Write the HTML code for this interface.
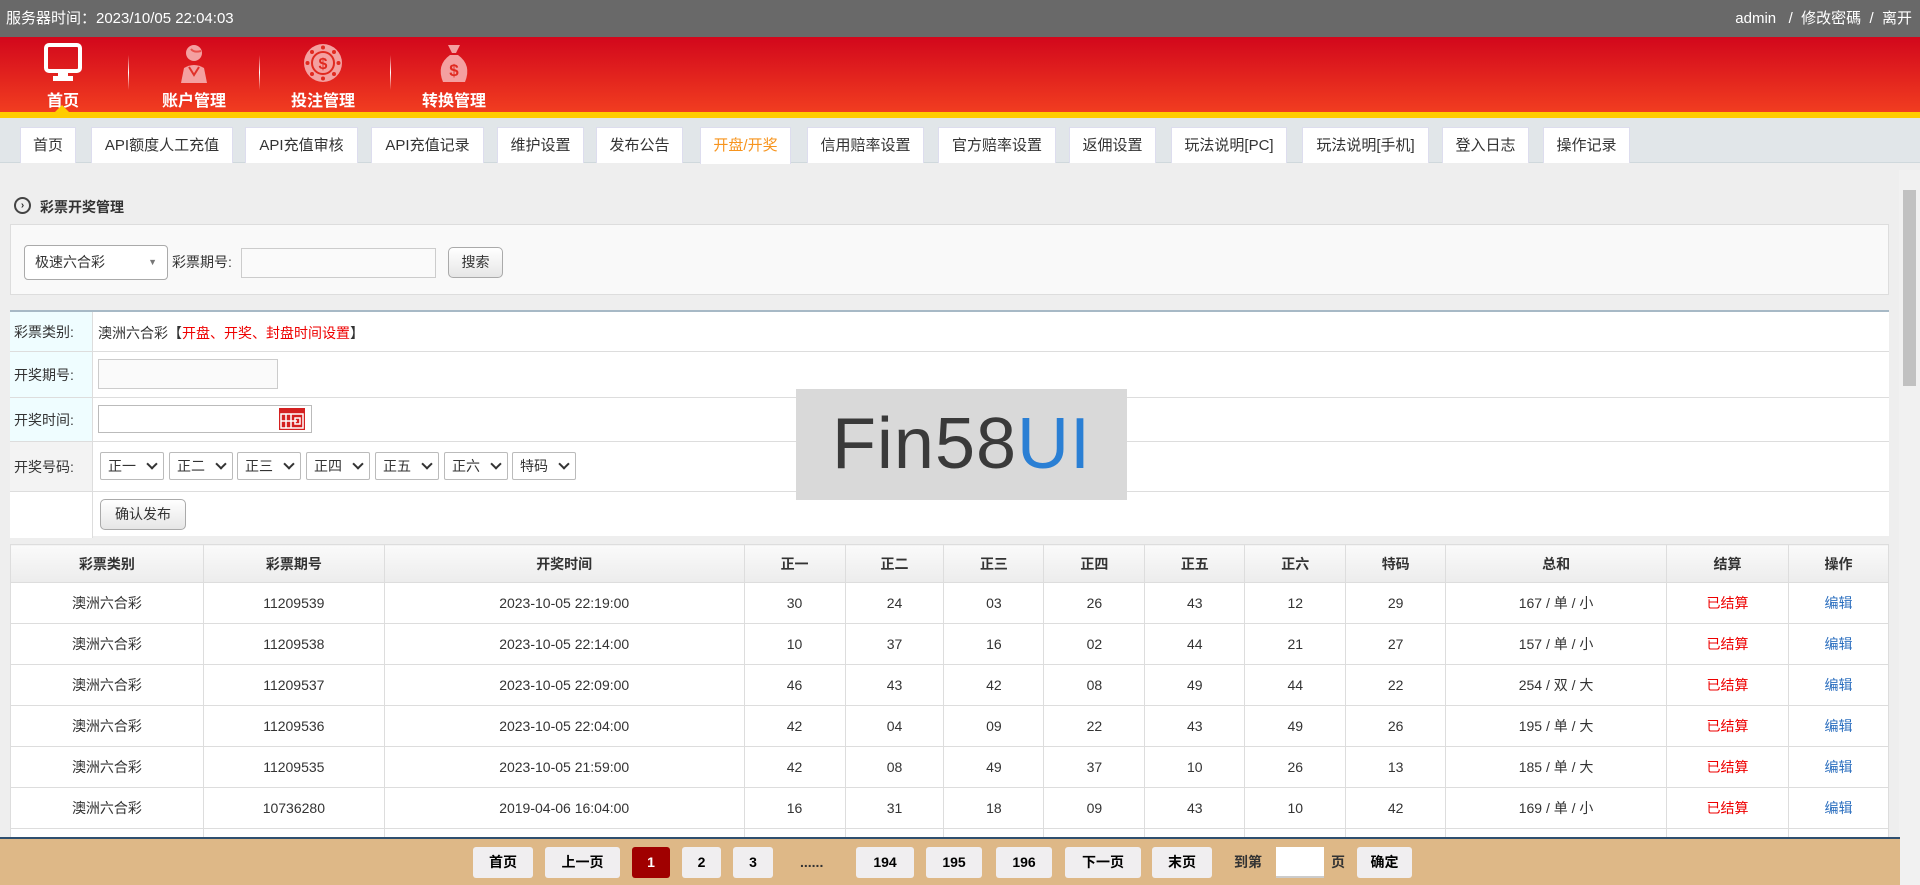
<!DOCTYPE html>
<html><head><meta charset="utf-8">
<style>
*{box-sizing:border-box;margin:0;padding:0}
body{width:1920px;height:885px;overflow:hidden;background:#eee;font-family:"Liberation Sans","Noto Sans CJK SC",sans-serif;font-size:14px;color:#333;position:relative}
.top{position:absolute;left:0;top:0;width:1920px;height:37px;background:#696969;color:#fff;font-size:15px;line-height:37px;padding:0 6px}
.top .r{position:absolute;right:8px;top:0}
.red{position:absolute;top:37px;left:0;width:1920px;height:75px;background:linear-gradient(#d2071c,#f13d20)}
.yel{position:absolute;top:112px;left:0;width:1920px;height:6px;background:#ffcc00}
.nav{position:absolute;top:0;color:#fff;font-weight:bold;font-size:16px;text-align:center;width:110px}
.nav svg{display:block;margin:6px auto 0}
.nav span{display:block;margin-top:4px}
.sep{position:absolute;top:55px;width:1px;height:35px;background:linear-gradient(rgba(255,255,255,0),#fff,rgba(255,255,255,0))}
.tabs{position:absolute;top:118px;left:0;width:1920px;height:45px;background:#e1e6e9;border-bottom:1px solid #cfd8dc}
.tab{position:absolute;top:9px;height:36px;background:#fff;border:1px solid #dde;border-bottom:none;font-size:15px;line-height:35px;text-align:center;color:#333}
.tab.on{color:#f7941d;height:37px}
.abs{position:absolute}
.panel{left:10px;top:224px;width:1879px;height:71px;background:#f9f9f9;border:1px solid #ddd}
.sel{background:#fff;border:1px solid #aaa;border-radius:4px}
.inp{background:#fafafa;border:1px solid #ccc}
.btn{background:linear-gradient(#fff,#e6e6e6);border:1px solid #aaa;border-radius:5px;text-align:center;font-size:14px}
.form{left:10px;top:310px;width:1879px;height:226px;background:#fff;border-top:2px solid #a7b9c6}
.frow{position:absolute;left:0;width:1879px;border-bottom:1px solid #ddd}
.lab{position:absolute;left:0;top:0;bottom:0;width:83px;border-right:1px solid #ddd;background:#effdff;line-height:normal;padding-left:4px;display:flex;align-items:center;font-size:14px}
.dd{position:absolute;top:10px;height:28px;background:#fff;border:1px solid #bbb;border-radius:2px;font-size:14px;line-height:26px;padding-left:7px}
.dd:after{content:"";position:absolute;right:7px;top:7px;width:6px;height:6px;border-right:2px solid #333;border-bottom:2px solid #333;transform:rotate(45deg)}
table{position:absolute;left:10px;top:544px;width:1879px;border-collapse:collapse;background:#fff}
td,th{border:1px solid #ddd;text-align:center;font-size:14px;height:41px}
th{height:38px;background:linear-gradient(#fafafa,#ececec);font-weight:bold;color:#333}
.rd{color:#e00}.bl{color:#2c6fbf}
.foot{position:absolute;left:0;top:837px;width:1900px;height:48px;background:#deb887;border-top:2px solid #2f4f6f}
.pb{position:absolute;top:8px;height:31px;background:#f0eef0;border-radius:3px;text-align:center;line-height:31px;font-size:14px;color:#000;font-weight:bold}
.sb{position:absolute;right:0;top:170px;width:21px;height:715px;background:#f1f1f1}
</style></head><body>
<div class="top">服务器时间：2023/10/05 22:04:03<div class="r">admin &nbsp; / &nbsp;修改密碼 &nbsp;/ &nbsp;离开</div></div>
<div class="red">
 <div class="nav" style="left:8px"><svg width="40" height="40" viewBox="0 0 40 40"><rect x="3" y="2" width="34" height="26" rx="3" fill="none" stroke="#fff" stroke-width="4"/><rect x="15" y="28" width="10" height="6" fill="#fff"/><rect x="10" y="33" width="20" height="5" fill="#fff"/></svg><span>首页</span></div>
 <div class="sep" style="left:128px;top:18px"></div>
 <div class="nav" style="left:139px"><svg width="34" height="40" viewBox="0 0 34 40"><circle cx="17" cy="10" r="8" fill="#f4a0a0"/><path d="M14 6 Q17 10 24 8" stroke="#e8504a" stroke-width="2" fill="none"/><path d="M4 40 L7 25 Q17 19 27 25 L30 40Z" fill="#f4a0a0"/><path d="M12 24 L17 32 L22 24" stroke="#e0302a" stroke-width="2" fill="none"/></svg><span>账户管理</span></div>
 <div class="sep" style="left:259px;top:18px"></div>
 <div class="nav" style="left:268px"><svg width="40" height="40" viewBox="0 0 40 40"><circle cx="20" cy="20" r="19" fill="#f4a0a0"/><circle cx="20" cy="20" r="11" fill="none" stroke="#e02a20" stroke-width="2"/><g fill="#e02a20"><circle cx="20" cy="4.5" r="2"/><circle cx="20" cy="35.5" r="2"/><circle cx="4.5" cy="20" r="2"/><circle cx="35.5" cy="20" r="2"/><circle cx="9" cy="9" r="2"/><circle cx="31" cy="9" r="2"/><circle cx="9" cy="31" r="2"/><circle cx="31" cy="31" r="2"/></g><text x="20" y="26" font-size="16" font-weight="bold" fill="#e02a20" text-anchor="middle" font-family="Liberation Sans">$</text></svg><span>投注管理</span></div>
 <div class="sep" style="left:390px;top:18px"></div>
 <div class="nav" style="left:399px"><svg width="36" height="40" viewBox="0 0 36 40"><path d="M12 2 L24 2 L20 10 L16 10Z M7 39 Q0 22 14 12 L22 12 Q36 22 29 39Z" fill="#f4a0a0"/><text x="18" y="33" font-size="17" font-weight="bold" fill="#e02a20" text-anchor="middle" font-family="Liberation Sans">$</text></svg><span>转换管理</span></div>
 <div class="abs" style="left:55px;top:68px;width:0;height:0;border-left:7px solid transparent;border-right:7px solid transparent;border-bottom:7px solid #ffcc00"></div>
</div>
<div class="yel"></div>
<div class="tabs">
<div class="tab" style="left:20px;width:56px">首页</div>
<div class="tab" style="left:91px;width:142px">API额度人工充值</div>
<div class="tab" style="left:245px;width:113px">API充值审核</div>
<div class="tab" style="left:371px;width:113px">API充值记录</div>
<div class="tab" style="left:497px;width:87px">维护设置</div>
<div class="tab" style="left:596px;width:87px">发布公告</div>
<div class="tab on" style="left:700px;width:91px">开盘/开奖</div>
<div class="tab" style="left:807px;width:117px">信用赔率设置</div>
<div class="tab" style="left:938px;width:118px">官方赔率设置</div>
<div class="tab" style="left:1069px;width:87px">返佣设置</div>
<div class="tab" style="left:1171px;width:116px">玩法说明[PC]</div>
<div class="tab" style="left:1302px;width:127px">玩法说明[手机]</div>
<div class="tab" style="left:1442px;width:87px">登入日志</div>
<div class="tab" style="left:1543px;width:87px">操作记录</div>
</div>
<div class="sb"><div style="position:absolute;left:4px;top:20px;width:13px;height:196px;background:#c1c1c1"></div></div>
<div class="abs" style="left:14px;top:197px;width:17px;height:17px;border:2px solid #444;border-radius:50%;font-size:10px;line-height:13px;text-align:center;font-weight:bold">›</div>
<div class="abs" style="left:40px;top:197px;font-weight:bold;font-size:14px">彩票开奖管理</div>
<div class="abs panel">
 <div class="abs sel" style="left:13px;top:20px;width:144px;height:35px;line-height:33px;padding-left:10px;font-size:14px">极速六合彩<span style="position:absolute;right:10px;top:0;font-size:9px;color:#777">▼</span></div>
 <div class="abs" style="left:161px;top:27px">彩票期号:</div>
 <div class="abs inp" style="left:230px;top:23px;width:195px;height:30px"></div>
 <div class="abs btn" style="left:437px;top:22px;width:55px;height:31px;line-height:29px">搜索</div>
</div>
<div class="abs form">
 <div class="frow" style="top:0;height:40px"><div class="lab">彩票类别:</div><div class="abs" style="left:88px;top:11px">澳洲六合彩【<span class="rd">开盘、开奖、封盘时间设置</span>】</div></div>
 <div class="frow" style="top:40px;height:46px"><div class="lab">开奖期号:</div><div class="abs inp" style="left:88px;top:7px;width:180px;height:30px"></div></div>
 <div class="frow" style="top:86px;height:44px"><div class="lab">开奖时间:</div><div class="abs" style="left:88px;top:7px;width:214px;height:28px;border:1px solid #bbb;background:#fff">
  <svg class="abs" style="right:6px;top:2px" width="26" height="22" viewBox="0 0 26 22"><rect x="0" y="0" width="26" height="22" fill="#d42020"/><rect x="2" y="6" width="22" height="14" fill="none" stroke="#fff" stroke-width="1.5"/><path d="M7 6V20M12 6V20M2 13H18" stroke="#fff" stroke-width="1.5"/><rect x="16" y="10" width="5" height="6" fill="none" stroke="#fff" stroke-width="1.5"/></svg></div></div>
 <div class="frow" style="top:130px;height:50px"><div class="lab" style="background:#f3f3f3">开奖号码:</div>
  <div class="dd" style="left:90px;width:64px">正一</div><div class="dd" style="left:159px;width:64px">正二</div><div class="dd" style="left:227px;width:64px">正三</div><div class="dd" style="left:296px;width:64px">正四</div><div class="dd" style="left:365px;width:64px">正五</div><div class="dd" style="left:434px;width:64px">正六</div><div class="dd" style="left:502px;width:64px">特码</div></div>
 <div class="frow" style="top:180px;height:46px;border-bottom:none"><div class="lab" style="background:#fff"></div><div class="abs btn" style="left:90px;top:7px;width:86px;height:31px;line-height:29px">确认发布</div></div>
</div>
<div class="abs" style="left:796px;top:389px;width:331px;height:111px;background:#d9d9d9;font-size:72px;line-height:111px;text-align:center;color:#3a3a3a;font-family:'Liberation Sans',sans-serif;letter-spacing:1px">Fin58<span style="color:#2a7fd4">UI</span></div>
<table>
<colgroup><col style="width:193px"><col style="width:181px"><col style="width:360px"><col style="width:101px"><col style="width:99px"><col style="width:100px"><col style="width:101px"><col style="width:100px"><col style="width:101px"><col style="width:100px"><col style="width:221px"><col style="width:122px"><col style="width:100px"></colgroup>
<tr><th>彩票类别</th><th>彩票期号</th><th>开奖时间</th><th>正一</th><th>正二</th><th>正三</th><th>正四</th><th>正五</th><th>正六</th><th>特码</th><th>总和</th><th>结算</th><th>操作</th></tr>
<tr><td>澳洲六合彩</td><td>11209539</td><td>2023-10-05 22:19:00</td><td>30</td><td>24</td><td>03</td><td>26</td><td>43</td><td>12</td><td>29</td><td>167 / 单 / 小</td><td class="rd">已结算</td><td class="bl">编辑</td></tr>
<tr><td>澳洲六合彩</td><td>11209538</td><td>2023-10-05 22:14:00</td><td>10</td><td>37</td><td>16</td><td>02</td><td>44</td><td>21</td><td>27</td><td>157 / 单 / 小</td><td class="rd">已结算</td><td class="bl">编辑</td></tr>
<tr><td>澳洲六合彩</td><td>11209537</td><td>2023-10-05 22:09:00</td><td>46</td><td>43</td><td>42</td><td>08</td><td>49</td><td>44</td><td>22</td><td>254 / 双 / 大</td><td class="rd">已结算</td><td class="bl">编辑</td></tr>
<tr><td>澳洲六合彩</td><td>11209536</td><td>2023-10-05 22:04:00</td><td>42</td><td>04</td><td>09</td><td>22</td><td>43</td><td>49</td><td>26</td><td>195 / 单 / 大</td><td class="rd">已结算</td><td class="bl">编辑</td></tr>
<tr><td>澳洲六合彩</td><td>11209535</td><td>2023-10-05 21:59:00</td><td>42</td><td>08</td><td>49</td><td>37</td><td>10</td><td>26</td><td>13</td><td>185 / 单 / 大</td><td class="rd">已结算</td><td class="bl">编辑</td></tr>
<tr><td>澳洲六合彩</td><td>10736280</td><td>2019-04-06 16:04:00</td><td>16</td><td>31</td><td>18</td><td>09</td><td>43</td><td>10</td><td>42</td><td>169 / 单 / 小</td><td class="rd">已结算</td><td class="bl">编辑</td></tr>
<tr><td></td><td></td><td></td><td></td><td></td><td></td><td></td><td></td><td></td><td></td><td></td><td></td><td></td></tr>
</table>
<div class="foot">
<div class="pb" style="left:473px;width:60px">首页</div>
<div class="pb" style="left:545px;width:75px">上一页</div>
<div class="pb" style="left:632px;width:38px;background:#a00000;color:#fff">1</div>
<div class="pb" style="left:682px;width:39px">2</div>
<div class="pb" style="left:733px;width:40px">3</div>
<div class="abs" style="left:800px;top:8px;line-height:31px;font-weight:bold">......</div>
<div class="pb" style="left:856px;width:58px">194</div>
<div class="pb" style="left:926px;width:56px">195</div>
<div class="pb" style="left:996px;width:56px">196</div>
<div class="pb" style="left:1065px;width:76px">下一页</div>
<div class="pb" style="left:1152px;width:60px">末页</div>
<div class="abs" style="left:1234px;top:8px;line-height:31px;font-weight:bold">到第</div>
<div class="abs" style="left:1276px;top:8px;width:48px;height:31px;background:#fff;border-bottom:2px solid #ccc"></div>
<div class="abs" style="left:1331px;top:8px;line-height:31px;font-weight:bold">页</div>
<div class="pb" style="left:1357px;width:55px">确定</div>
</div>
</body></html>
